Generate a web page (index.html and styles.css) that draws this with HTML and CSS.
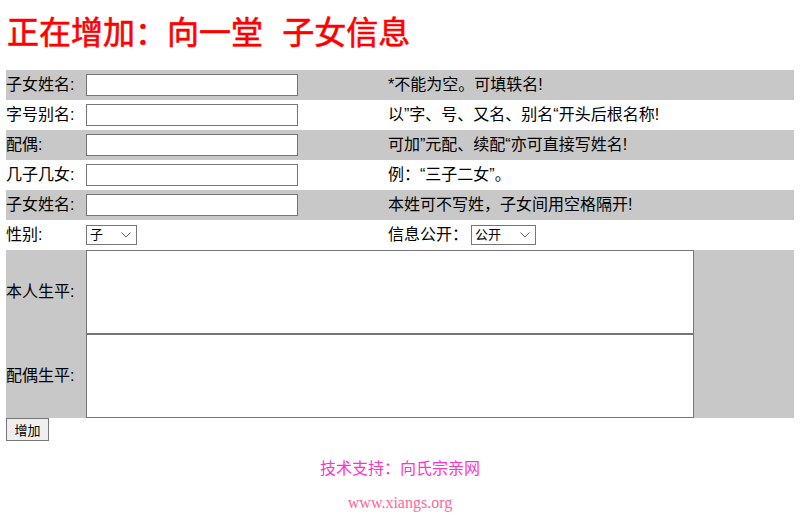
FILE: index.html
```html
<!DOCTYPE html>
<html lang="zh">
<head>
<meta charset="utf-8">
<title>增加子女信息</title>
<link rel="stylesheet" href="styles.css">
</head>
<body>
<div class="page">
  <div class="title">正在增加：向一堂 子女信息</div>
  <form class="form">
    <table class="grid">
      <colgroup>
        <col class="c1"><col class="c2"><col class="c3"><col class="c4">
      </colgroup>
      <tr class="gray">
        <td>子女姓名:</td>
        <td><input class="txt" type="text"></td>
        <td colspan="2">*不能为空。可填轶名!</td>
      </tr>
      <tr>
        <td>字号别名:</td>
        <td><input class="txt" type="text"></td>
        <td colspan="2">以”字、号、又名、别名“开头后根名称!</td>
      </tr>
      <tr class="gray">
        <td>配偶:</td>
        <td><input class="txt" type="text"></td>
        <td colspan="2">可加”元配、续配“亦可直接写姓名!</td>
      </tr>
      <tr>
        <td>几子几女:</td>
        <td><input class="txt" type="text"></td>
        <td colspan="2">例：“三子二女”。</td>
      </tr>
      <tr class="gray">
        <td>子女姓名:</td>
        <td><input class="txt" type="text"></td>
        <td colspan="2">本姓可不写姓，子女间用空格隔开!</td>
      </tr>
      <tr>
        <td>性别:</td>
        <td>
          <span class="selwrap">
            <select class="sel sel-sex"><option>子</option><option>女</option></select>
            <svg class="chev" width="10" height="6" viewBox="0 0 10 6"><path d="M0.5 0.5 L5 5 L9.5 0.5" fill="none" stroke="#6b6b6b" stroke-width="1"/></svg>
          </span>
        </td>
        <td>信息公开：</td>
        <td>
          <span class="selwrap">
            <select class="sel sel-pub"><option>公开</option><option>不公开</option></select>
            <svg class="chev" width="10" height="6" viewBox="0 0 10 6"><path d="M0.5 0.5 L5 5 L9.5 0.5" fill="none" stroke="#6b6b6b" stroke-width="1"/></svg>
          </span>
        </td>
      </tr>
      <tr class="gray tall">
        <td>本人生平:</td>
        <td colspan="3"><textarea class="area"></textarea></td>
      </tr>
      <tr class="gray tall">
        <td>配偶生平:</td>
        <td colspan="3"><textarea class="area"></textarea></td>
      </tr>
    </table>
    <button class="btn" type="button">增加</button>
  </form>
  <div class="footer">
    <div class="support">技术支持：向氏宗亲网</div>
    <div class="site">www.xiangs.org</div>
  </div>
</div>
</body>
</html>
```

FILE: styles.css
```css
html, body {
  margin: 0;
  padding: 0;
  background: #ffffff;
}

body {
  font-family: "Liberation Sans", "Noto Sans CJK SC", sans-serif;
  font-size: 16px;
  color: #000000;
}

.page {
  width: 788px;
  padding: 6px 8px 0 6px;
}

.title {
  color: #ff0000;
  font-family: "Noto Sans CJK SC", sans-serif;
  font-size: 32px;
  font-weight: 400;
  line-height: 48px;
  height: 48px;
  margin-bottom: 16px;
  padding-left: 1px;
  word-spacing: 12px;
  -webkit-text-stroke: 0.6px #ff0000;
}

.form {
  margin: 0;
}

.grid {
  width: 788px;
  border-collapse: collapse;
  border-spacing: 0;
  table-layout: fixed;
}

.c1 { width: 80px; }
.c2 { width: 302px; }
.c3 { width: 83px; }
.c4 { width: 323px; }

.grid td {
  padding: 0;
  height: 30px;
  vertical-align: middle;
  white-space: nowrap;
  line-height: 20px;
}

.grid tr.gray td {
  background: #c8c8c8;
}

.grid tr.tall td {
  height: 84px;
}

.txt {
  display: block;
  box-sizing: border-box;
  width: 212px;
  height: 22px;
  margin: 0;
  border: 1px solid #767676;
  background: #ffffff;
  padding: 1px 2px;
  font-size: 13px;
}

.selwrap {
  position: relative;
  display: block;
  width: max-content;
}

.sel {
  display: block;
  box-sizing: border-box;
  height: 20px;
  margin: 0;
  border: 1px solid #767676;
  border-radius: 0;
  background: #ffffff;
  font-family: "Liberation Sans", "Noto Sans CJK SC", sans-serif;
  font-size: 13px;
  color: #000;
  padding: 0 0 0 3px;
  -webkit-appearance: none;
  appearance: none;
  line-height: 18px;
}

.chev {
  position: absolute;
  right: 6px;
  top: 7px;
  pointer-events: none;
}

.sel-sex { width: 51px; }
.sel-pub { width: 65px; }

.area {
  display: block;
  box-sizing: border-box;
  width: 608px;
  height: 84px;
  margin: 0;
  border: 1px solid #767676;
  background: #ffffff;
  resize: none;
}

.btn {
  display: block;
  box-sizing: border-box;
  width: 43px;
  height: 23px;
  margin: 0;
  padding: 0;
  border: 1px solid #767676;
  border-radius: 0;
  background: #efefef;
  font-family: "Liberation Sans", "Noto Sans CJK SC", sans-serif;
  font-size: 13px;
  color: #000;
}

.footer {
  margin-top: 16px;
  text-align: center;
}

.support {
  color: #ff33cc;
  font-size: 16px;
  line-height: 24px;
}

.site {
  margin-top: 10px;
  color: #ff6699;
  font-family: "Liberation Serif", serif;
  font-size: 16px;
  line-height: 24px;
}
```
